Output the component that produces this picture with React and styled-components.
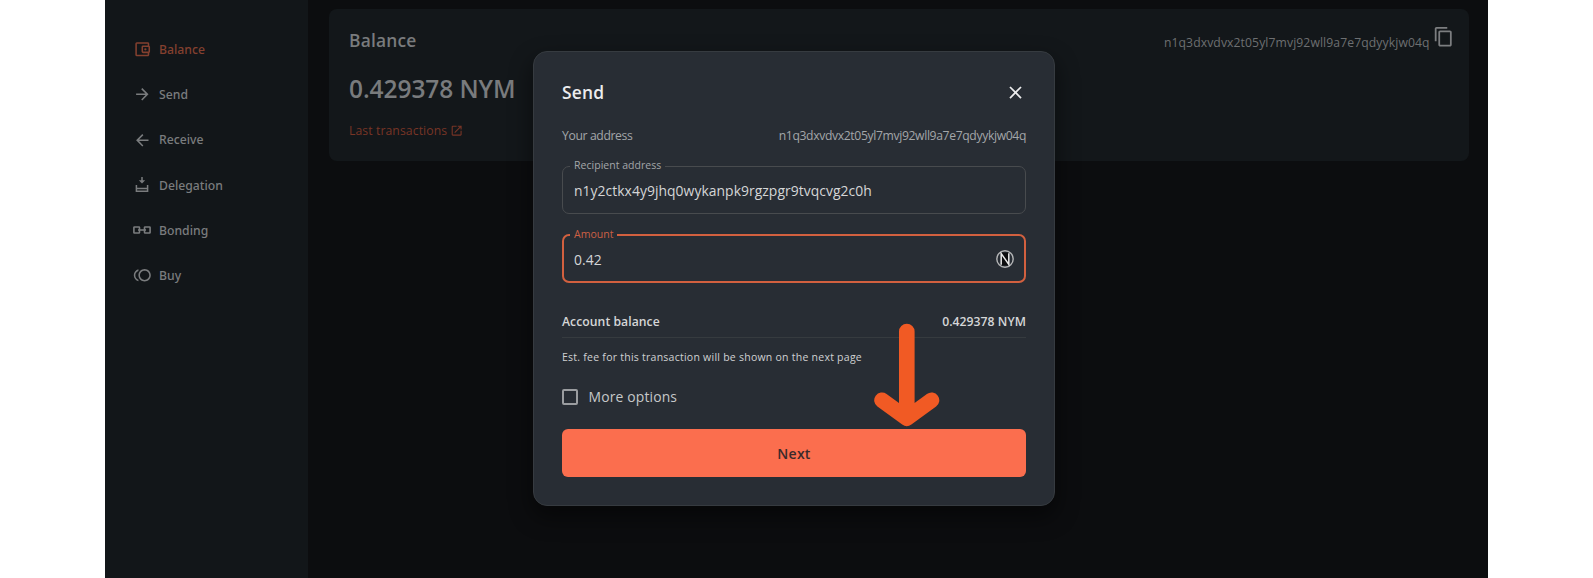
import React from "react";
import styled, { createGlobalStyle } from "styled-components";
import {
  MdOutlineAccountBalanceWallet,
  MdArrowForward,
  MdArrowBack,
  MdOutlineToll,
  MdOpenInNew,
  MdContentCopy,
  MdClose,
} from "react-icons/md";

const GlobalStyle = createGlobalStyle`
  *, *::before, *::after { box-sizing: border-box; }
  body {
    margin: 0;
    background: #fff;
    font-family: "Open Sans", "Noto Sans", sans-serif;
    overflow: hidden;
  }
`;

const Window = styled.div`
  position: relative;
  display: flex;
  width: 1383px;
  height: 578px;
  margin-left: 105px;
  background: #0c0d0f;
`;

const Sidebar = styled.nav`
  display: flex;
  flex-direction: column;
  width: 203px;
  padding: 27px 0 0 27px;
  background: #121619;
`;

const NavItem = styled.a`
  display: flex;
  align-items: center;
  height: 45.2px;
  gap: 7px;
  color: ${(p) => (p.$active ? "#84402f" : "#7a7c7e")};
  font-family: "Noto Sans", "Open Sans", sans-serif;
  font-size: 12.2px;
  font-weight: 500;
  letter-spacing: 0.02px;
`;

const NavIcon = styled.span`
  display: flex;
  justify-content: center;
  width: 20px;
  font-size: 18.6px;
`;

const Main = styled.main`
  flex: 1;
  padding: 9px 19px 0 21px;
`;

const BalanceCard = styled.section`
  display: flex;
  justify-content: space-between;
  align-items: flex-start;
  height: 152px;
  padding: 16px 14.5px 0 20px;
  border-radius: 8px;
  background: #13171a;
  color: #797b7d;
`;

const CardTitle = styled.h2`
  margin: 0;
  font-size: 17.4px;
  line-height: 31px;
  font-weight: 600;
  letter-spacing: 0.2px;
`;

const Amount = styled.div`
  margin-top: 16px;
  font-size: 24.5px;
  line-height: 34px;
  font-weight: 600;
  letter-spacing: -0.07px;
`;

const TxLink = styled.a`
  display: flex;
  align-items: center;
  gap: 3px;
  margin-top: 15px;
  color: #783526;
  font-size: 12.2px;
  line-height: 20px;
  letter-spacing: 0.1px;

  svg {
    font-size: 13.3px;
  }
`;

const AddressCopy = styled.div`
  display: flex;
  align-items: flex-start;
  gap: 3.5px;
  font-size: 12.2px;
  line-height: 35px;
  letter-spacing: 0.09px;
  color: #6d6f71;

  svg {
    font-size: 21.4px;
    margin-top: 1px;
    color: #7c7e80;
  }
`;

const Modal = styled.div`
  position: absolute;
  left: 428px;
  top: 51px;
  display: flex;
  flex-direction: column;
  width: 522px;
  height: 455px;
  padding: 26px 28px;
  border: 1px solid #363b40;
  border-radius: 14px;
  background: #282d34;
  box-shadow: 0 10px 22px 2px rgba(0, 0, 0, 0.45);
`;

const ModalHeader = styled.header`
  display: flex;
  justify-content: space-between;
  align-items: center;
  height: 28px;
  color: #ececed;

  svg {
    font-size: 21px;
  }
`;

const ModalTitle = styled.h1`
  margin: 0;
  font-size: 17.4px;
  font-weight: 600;
  letter-spacing: 0.2px;
`;

const InfoRow = styled.div`
  display: flex;
  justify-content: space-between;
  margin-top: 21px;
  font-size: 12.2px;
  line-height: 18px;
  letter-spacing: -0.37px;
  color: #a3a6a9;
`;

const Field = styled.fieldset`
  min-width: 0;
  height: 54px;
  margin: 15px 0 0;
  padding: 0 ${(p) => (p.$focused ? "10px 0 10px" : "10px 0 11px")};
  border: ${(p) => (p.$focused ? "2px solid #d2603f" : "1px solid #484b4e")};
  border-radius: 7px;
  color: #d5d6d7;
`;

const Legend = styled.legend`
  height: 12px;
  margin-left: -4px;
  padding: 0 4px;
  font-size: 10.5px;
  line-height: 11px;
  letter-spacing: 0.03px;
  color: ${(p) => (p.$focused ? "#cc6044" : "#a3a6a9")};
`;

const FieldBody = styled.div`
  display: flex;
  align-items: center;
  justify-content: space-between;
  height: 36px;
  font-size: 13.9px;
  letter-spacing: 0.05px;
`;

const BalanceRow = styled.div`
  display: flex;
  justify-content: space-between;
  height: 29px;
  margin-top: 25.5px;
  padding-top: 4px;
  border-bottom: 1px solid #363b3f;
  font-size: 12.2px;
  line-height: 18px;
  font-weight: 600;
  letter-spacing: 0.05px;
  color: #d5d6d7;
`;

const FeeNote = styled.p`
  margin: 10px 0 0;
  font-size: 10.5px;
  line-height: 18px;
  letter-spacing: 0.25px;
  color: #d0d1d2;
`;

const Option = styled.label`
  display: flex;
  align-items: center;
  gap: 10.2px;
  height: 20px;
  margin-top: 21px;
  font-size: 13.9px;
  letter-spacing: 0.15px;
  color: #c6c8c9;
`;

const Checkbox = styled.span`
  width: 16px;
  height: 16px;
  margin-left: 0.4px;
  border: 2px solid #9b9da0;
  border-radius: 2px;
`;

const NextButton = styled.button`
  height: 48px;
  margin-top: 22px;
  padding: 1px 0 0;
  border: 0;
  border-radius: 6px;
  background: #fb6e4e;
  color: #3a2a2b;
  font: 600 14px "Open Sans", "Noto Sans", sans-serif;
  letter-spacing: 0.25px;
`;

const Pointer = styled.svg`
  position: absolute;
  left: 768px;
  top: 322px;
`;

const DelegationIcon = () => (
  <svg width="14" height="16" viewBox="0 0 14 16" fill="none" stroke="currentColor" strokeWidth="1.5">
    <path d="M7 0v4.5" />
    <path d="M3.8 3.2h6.4L7 6.6z" fill="currentColor" stroke="none" />
    <path d="M1.4 8v6.3h11.2V8M1.4 11.4h11.2" />
  </svg>
);

const BondingIcon = () => (
  <svg width="18" height="8" viewBox="0 0 18 8" fill="none" stroke="currentColor" strokeWidth="1.6">
    <rect x="0.9" y="1" width="5.6" height="6" rx="0.6" />
    <rect x="11.5" y="1" width="5.6" height="6" rx="0.6" />
    <path d="M5 4h8" />
  </svg>
);

const NymLogo = () => (
  <svg width="18" height="18" viewBox="0 0 18 18" fill="none">
    <path d="M5 2.6h8v12.8H5z" fill="#0c0d0f" />
    <circle cx="9" cy="9" r="8.2" stroke="#b4b5b6" strokeWidth="1.4" />
    <path d="M5.2 14.8V3.6L12.8 14.4V3.2" stroke="#e8e8e8" strokeWidth="1.5" />
  </svg>
);

const NAV = [
  { label: "Balance", icon: <MdOutlineAccountBalanceWallet />, active: true },
  { label: "Send", icon: <MdArrowForward /> },
  { label: "Receive", icon: <MdArrowBack /> },
  { label: "Delegation", icon: <DelegationIcon /> },
  { label: "Bonding", icon: <BondingIcon /> },
  { label: "Buy", icon: <MdOutlineToll /> },
];

const ADDRESS = "n1q3dxvdvx2t05yl7mvj92wll9a7e7qdyykjw04q";

export default function App() {
  return (
    <>
      <GlobalStyle />
      <Window>
        <Sidebar>
          {NAV.map((item) => (
            <NavItem key={item.label} $active={item.active}>
              <NavIcon>{item.icon}</NavIcon>
              {item.label}
            </NavItem>
          ))}
        </Sidebar>
        <Main>
          <BalanceCard>
            <div>
              <CardTitle>Balance</CardTitle>
              <Amount>0.429378 NYM</Amount>
              <TxLink>
                Last transactions <MdOpenInNew />
              </TxLink>
            </div>
            <AddressCopy>
              {ADDRESS}
              <MdContentCopy />
            </AddressCopy>
          </BalanceCard>
        </Main>

        <Modal role="dialog">
          <ModalHeader>
            <ModalTitle>Send</ModalTitle>
            <MdClose />
          </ModalHeader>
          <InfoRow>
            <span>Your address</span>
            <span>{ADDRESS}</span>
          </InfoRow>
          <Field>
            <Legend>Recipient address</Legend>
            <FieldBody>n1y2ctkx4y9jhq0wykanpk9rgzpgr9tvqcvg2c0h</FieldBody>
          </Field>
          <Field $focused>
            <Legend $focused>Amount</Legend>
            <FieldBody>
              0.42
              <NymLogo />
            </FieldBody>
          </Field>
          <BalanceRow>
            <span>Account balance</span>
            <span>0.429378 NYM</span>
          </BalanceRow>
          <FeeNote>Est. fee for this transaction will be shown on the next page</FeeNote>
          <Option>
            <Checkbox />
            More options
          </Option>
          <NextButton>Next</NextButton>
        </Modal>

        <Pointer width="68" height="106" viewBox="0 0 68 106">
          <path
            d="M33.8 9.5V92M9 78.3L33.8 96.3L58.5 78.3"
            fill="none"
            stroke="#f15a24"
            strokeWidth="15.6"
            strokeLinecap="round"
            strokeLinejoin="round"
          />
        </Pointer>
      </Window>
    </>
  );
}
